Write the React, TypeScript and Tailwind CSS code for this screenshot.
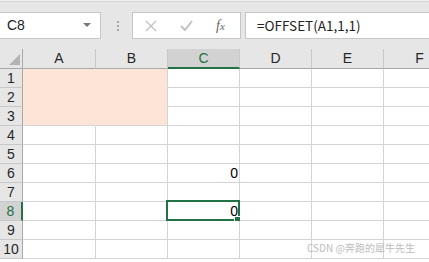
const COLS = [
  { key: 'A', w: 'w-[73px]' },
  { key: 'B', w: 'w-[72px]' },
  { key: 'C', w: 'w-[72px]' },
  { key: 'D', w: 'w-[72px]' },
  { key: 'E', w: 'w-[72px]' },
  { key: 'F', w: 'w-[72px]' },
];
const ROWS = [1, 2, 3, 4, 5, 6, 7, 8, 9, 10];

const SEL_COL = 'C';
const SEL_ROW = 8;

function isPeach(col: string, row: number) {
  return (col === 'A' || col === 'B') && row <= 3;
}

function cellValue(col: string, row: number) {
  if (col === 'C' && (row === 6 || row === 8)) return '0';
  return '';
}

function Toolbar() {
  return (
    <div className="h-[49px] shrink-0 bg-[#f0f0f0] pt-px">
      <div className="flex h-[48px] border-t border-[#d4d4d4] bg-[#e6e6e6] pt-[10px]">
        {/* name box */}
        <div className="-ml-px flex h-[27px] w-[102px] items-center border border-[#c6c6c6] bg-white pl-[7px] pr-[6px]">
          <span className="flex-1 text-[14px] text-[#222]">C8</span>
          <svg width="8" height="5" viewBox="0 0 8 5" className="mr-[3px]">
            <path d="M0 0h8L4 4z" fill="#777" />
          </svg>
        </div>
        {/* grip dots */}
        <div className="ml-[15px] flex h-[27px] w-[3px] flex-col items-center justify-center gap-[2px]">
          <span className="h-[2px] w-[2px] bg-[#a8a8a8]" />
          <span className="h-[2px] w-[2px] bg-[#a8a8a8]" />
          <span className="h-[2px] w-[2px] bg-[#a8a8a8]" />
        </div>
        {/* cancel / enter / fx */}
        <div className="ml-[13px] flex h-[27px] w-[109px] items-center border border-[#c6c6c6] bg-white">
          <svg width="12" height="12" viewBox="0 0 12 12" className="ml-[12px]">
            <path d="M1 1l10 10M11 1L1 11" stroke="#c2c2c2" strokeWidth="1.4" />
          </svg>
          <svg width="13" height="11" viewBox="0 0 13 11" className="ml-[23px]">
            <path d="M1 6l4 4 7-9" stroke="#c2c2c2" strokeWidth="2" fill="none" />
          </svg>
          <span className="ml-[23px] font-['Liberation_Serif',serif] text-[14px] italic text-[#666]">
            f<span className="text-[11px]">x</span>
          </span>
        </div>
        {/* formula input */}
        <div className="ml-[4px] flex h-[27px] flex-1 items-center border border-r-0 border-[#c6c6c6] bg-white pl-[11px]">
          <span className="font-['Noto_Sans_CJK_SC','Liberation_Sans',sans-serif] text-[13.5px] text-[#222]">
            =OFFSET(A1,1,1)
          </span>
        </div>
      </div>
    </div>
  );
}

function HeaderRow() {
  return (
    <div className="flex h-[20px] shrink-0">
      <div className="relative h-[20px] w-[23px] shrink-0 border-r border-b border-[#a9a9a9] bg-[#e6e6e6]">
        <svg width="12" height="12" viewBox="0 0 12 12" className="absolute left-[9px] top-[5px]">
          <path d="M0 11L11 0v11z" fill="#b4b4b4" />
        </svg>
      </div>
      {COLS.map((c) => {
        const sel = c.key === SEL_COL;
        return (
          <div
            key={c.key}
            className={`flex h-[20px] shrink-0 items-center justify-center border-r border-[#c8c8c8] text-[14px] ${c.w} ${
              sel
                ? 'border-b-2 border-b-[#217346] bg-[#d2d2d2] text-[#217346]'
                : 'border-b border-b-[#a9a9a9] bg-[#e6e6e6] text-[#262626]'
            }`}
          >
            <span className={sel ? 'mt-[1px]' : ''}>{c.key}</span>
          </div>
        );
      })}
    </div>
  );
}

function GridRow({ row }: { row: number }) {
  const selRow = row === SEL_ROW;
  return (
    <div className="flex h-[19px] shrink-0">
      <div
        className={`flex h-[19px] w-[23px] shrink-0 items-center justify-center border-b border-b-[#c8c8c8] text-[14px] ${
          selRow
            ? 'border-r-2 border-r-[#217346] bg-[#d2d2d2] text-[#217346]'
            : 'border-r border-r-[#a9a9a9] bg-[#e6e6e6] text-[#262626]'
        }`}
      >
        {row}
      </div>
      {COLS.map((c) => {
        const peach = isPeach(c.key, row);
        const selected = selRow && c.key === SEL_COL;
        const v = cellValue(c.key, row);
        const rightPeach = peach && c.key === 'A';
        const bottomPeach = peach && row < 3;
        return (
          <div
            key={c.key}
            className={`relative flex h-[19px] shrink-0 items-center justify-end border-r border-b pr-[1px] text-[14px] text-black ${c.w} ${
              peach ? 'bg-[#fce4d6]' : 'bg-white'
            } ${rightPeach ? 'border-r-[#fce4d6]' : 'border-r-[#d4d4d4]'} ${
              bottomPeach ? 'border-b-[#fce4d6]' : 'border-b-[#d4d4d4]'
            }`}
          >
            {v}
            {selected && (
              <div className="absolute -left-[2px] -top-[2px] -right-[1px] -bottom-[1px] border-2 border-[#217346]">
                <div className="absolute -right-[2px] -bottom-[3px] h-[6px] w-[6px] border-l border-t border-white bg-[#217346]" />
              </div>
            )}
          </div>
        );
      })}
    </div>
  );
}

export default function App() {
  return (
    <div className="relative flex h-[262px] w-[429px] flex-col overflow-hidden bg-white font-['Liberation_Sans',sans-serif]">
      <Toolbar />
      <HeaderRow />
      {ROWS.map((r) => (
        <GridRow key={r} row={r} />
      ))}
      <div className="absolute left-[307px] top-[241px] whitespace-nowrap font-['Noto_Sans_CJK_SC',sans-serif] text-[10px] leading-[14px] text-[#bcbcbc]">
        CSDN @奔跑的犀牛先生
      </div>
    </div>
  );
}
